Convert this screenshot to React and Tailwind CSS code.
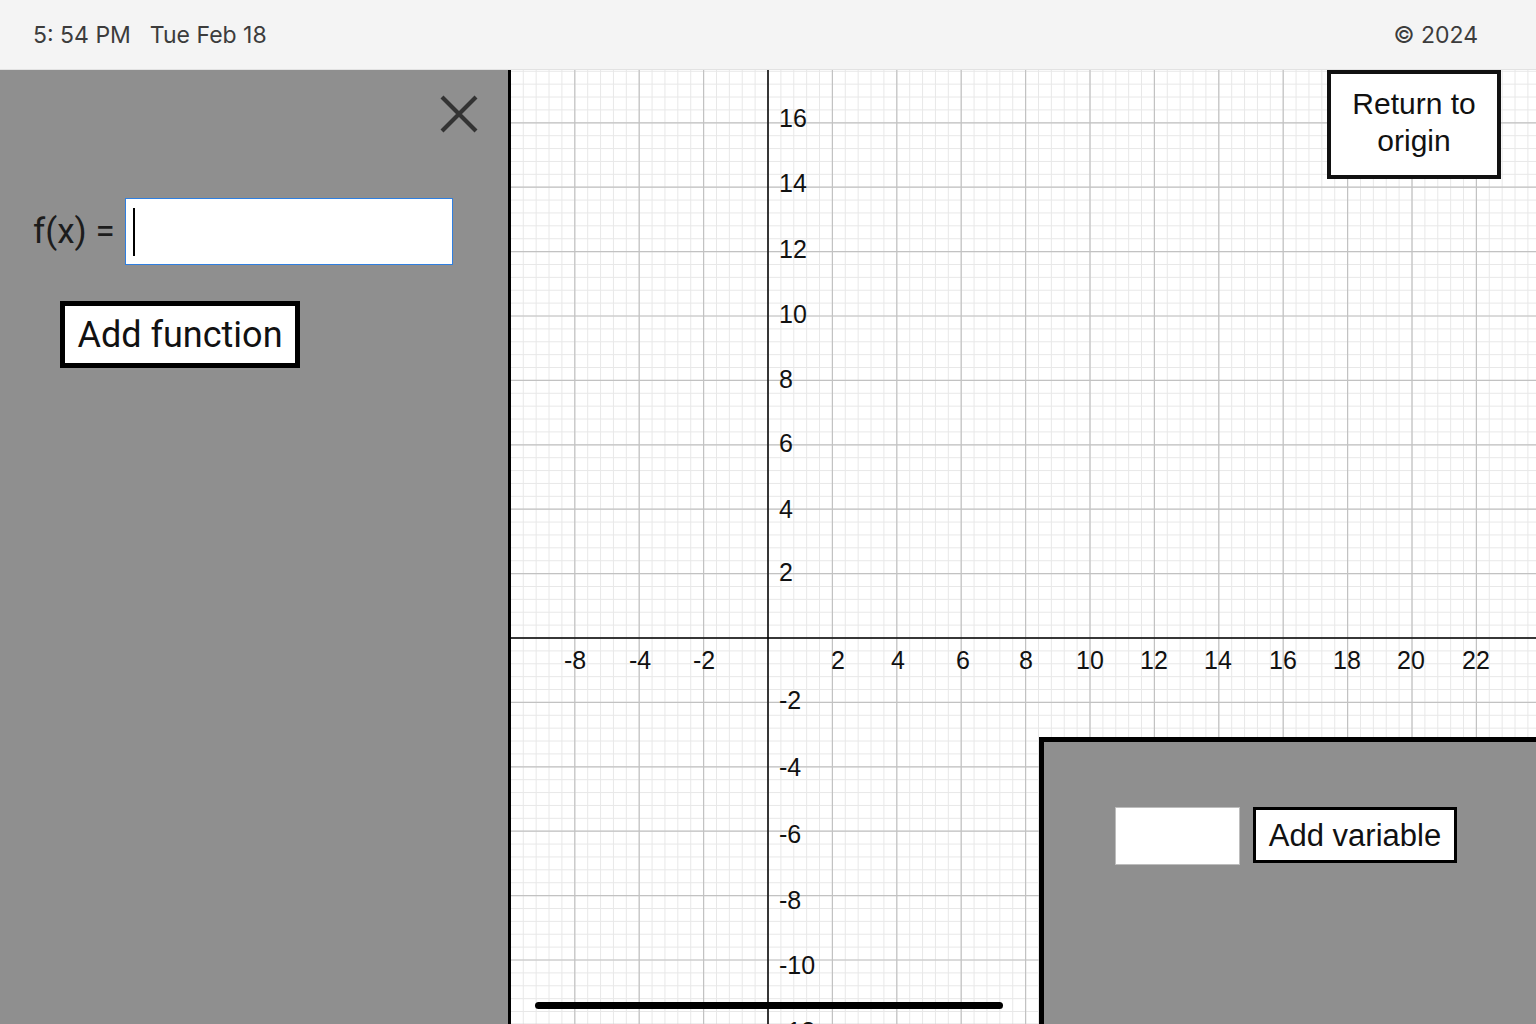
import React from "react";

const U = 64.4;
const OX = 257;
const OY = 568;
const W = 1025;
const H = 954;

const xLabels = [
  ["-8", 575], ["-4", 640], ["-2", 704], ["2", 838], ["4", 898], ["6", 963], ["8", 1026],
  ["10", 1090], ["12", 1154], ["14", 1218], ["16", 1283], ["18", 1347], ["20", 1411], ["22", 1476],
];
const yLabels = [
  ["16", 118], ["14", 183], ["12", 249], ["10", 314], ["8", 379], ["6", 443], ["4", 509], ["2", 572],
  ["-2", 700], ["-4", 767], ["-6", 834], ["-8", 900], ["-10", 965], ["-12", 1031],
];

function Grid() {
  const minorV = [];
  for (let i = -20; i <= 60; i++) minorV.push(OX + (i * U) / 5);
  const minorH = [];
  for (let j = -45; j <= 40; j++) minorH.push(OY + (j * U) / 5);
  const majorV = [];
  for (let i = -4; i <= 12; i++) majorV.push(OX + i * U);
  const majorH = [];
  for (let j = -9; j <= 7; j++) majorH.push(OY + j * U);
  return (
    <svg width={W} height={H} className="block" style={{ fontFamily: '"Liberation Sans", Arial, sans-serif' }}>
      <rect width={W} height={H} fill="#ffffff" />
      {minorV.map((x, i) => (
        <line key={"mv" + i} x1={x} y1={0} x2={x} y2={H} stroke="#e8e8e8" strokeWidth="1" />
      ))}
      {minorH.map((y, i) => (
        <line key={"mh" + i} x1={0} y1={y} x2={W} y2={y} stroke="#e8e8e8" strokeWidth="1" />
      ))}
      {majorV.map((x, i) => (
        <line key={"Mv" + i} x1={x} y1={0} x2={x} y2={H} stroke="#c2c2c2" strokeWidth="1.2" />
      ))}
      {majorH.map((y, i) => (
        <line key={"Mh" + i} x1={0} y1={y} x2={W} y2={y} stroke="#c2c2c2" strokeWidth="1.2" />
      ))}
      <line x1={OX} y1={0} x2={OX} y2={H} stroke="#000" strokeWidth="1.5" />
      <line x1={0} y1={OY} x2={W} y2={OY} stroke="#000" strokeWidth="1.5" />
      {xLabels.map(([t, x]) => (
        <text key={"x" + t} x={x - 511} y={660 - 70} textAnchor="middle" dominantBaseline="central" fontSize="25" fill="#111">
          {t}
        </text>
      ))}
      {yLabels.map(([t, y]) => (
        <text key={"y" + t} x={779 - 511} y={y - 70} dominantBaseline="central" fontSize="25" fill="#111">
          {t}
        </text>
      ))}
    </svg>
  );
}

export default function App() {
  return (
    <div className="w-[1536px] h-[1024px] overflow-hidden flex flex-col bg-white">
      <div
        className="h-[70px] shrink-0 bg-[#f4f4f4] border-b border-[#e2e2e2] flex items-center justify-between pl-[33px] pr-[58px] text-[23px] text-[#3c3c3c]"
        style={{ fontFamily: 'Inter, "Open Sans", sans-serif' }}
      >
        <div className="flex gap-[19px] pt-[2px]">
          <span>5: 54 PM</span>
          <span>Tue Feb 18</span>
        </div>
        <span className="pt-[2px]">© 2024</span>
      </div>
      <div className="flex flex-1 min-h-0">
        <div className="w-[508px] shrink-0 bg-[#8f8f8f] flex flex-col" style={{ fontFamily: 'Roboto, "Liberation Sans", sans-serif' }}>
          <div className="flex justify-end pr-[29px] pt-[24px]">
            <svg width="40" height="40" viewBox="0 0 40 40">
              <path d="M3 3 L37 37 M37 3 L3 37" stroke="#333" strokeWidth="4.2" strokeLinecap="butt" />
            </svg>
          </div>
          <div className="flex items-center mt-[64px] pl-[33px] gap-[10px]">
            <span className="text-[35px] text-[#1c1c1c] leading-none">f(x) =</span>
            <div className="w-[328px] h-[67px] bg-white border border-[#2f7fe0] flex items-center pl-[7px]">
              <div className="w-[2px] h-[48px] bg-black" />
            </div>
          </div>
          <div className="pl-[60px] mt-[36px]">
            <button className="w-[240px] h-[67px] bg-white border-[5px] border-black text-[36px] text-[#111] leading-none flex items-center justify-center">
              Add function
            </button>
          </div>
        </div>
        <div className="flex-1 border-l-[3px] border-black relative overflow-hidden">
          <Grid />
          <button
            className="absolute top-0 right-[35px] w-[174px] h-[109px] bg-white border-[4px] border-[#111] text-[30px] leading-[37px] text-[#111] flex items-center justify-center text-center pb-[6px]"
            style={{ fontFamily: '"Liberation Sans", Arial, sans-serif' }}
          >
            Return to
            <br />
            origin
          </button>
          <div className="absolute left-[24px] top-[932px] w-[468px] h-[7px] rounded-full bg-black" />
          <div
            className="absolute left-[528px] top-[667px] right-0 bottom-0 bg-[#8f8f8f] border-t-[5px] border-l-[5px] border-black flex items-start pl-[71px] pt-[65px] gap-[13px]"
            style={{ fontFamily: '"Liberation Sans", Arial, sans-serif' }}
          >
            <div className="w-[125px] h-[58px] bg-white border border-[#bdbdbd]" />
            <button className="w-[204px] h-[56px] bg-white border-[3px] border-black text-[31px] text-[#111] leading-none flex items-center justify-center">
              Add variable
            </button>
          </div>
        </div>
      </div>
    </div>
  );
}
